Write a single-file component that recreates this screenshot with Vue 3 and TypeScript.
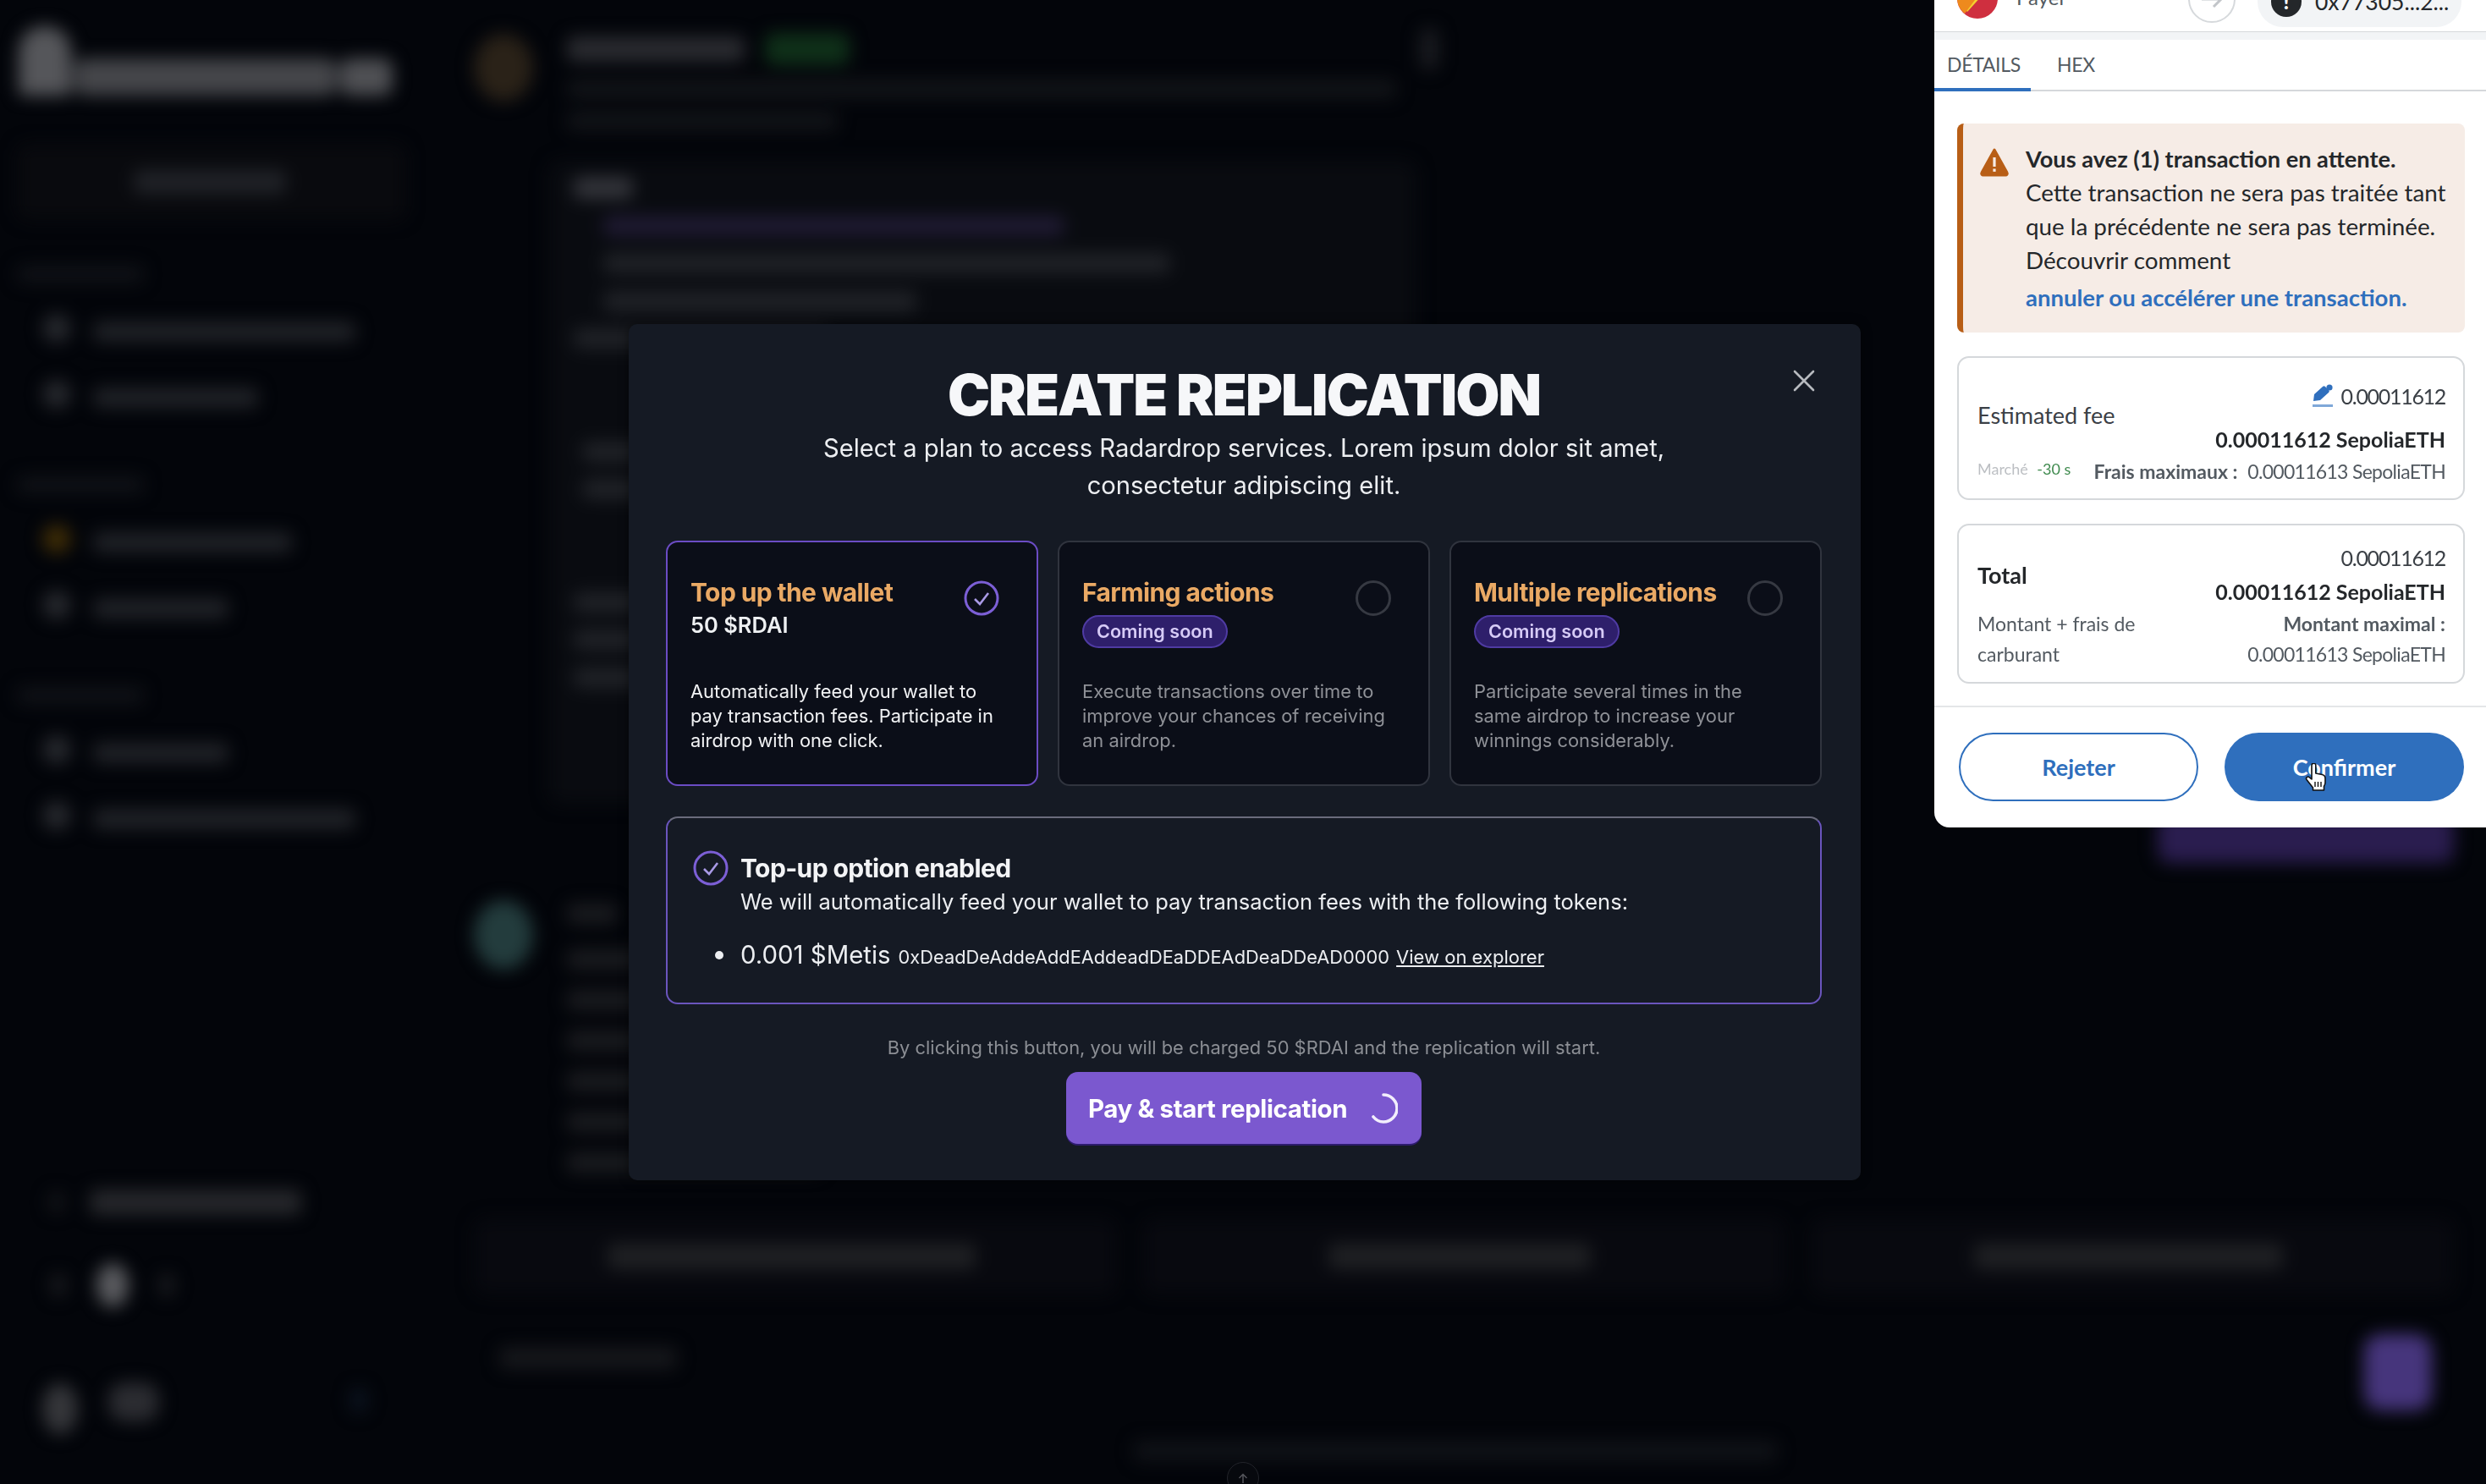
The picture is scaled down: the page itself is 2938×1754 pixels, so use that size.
<script setup lang="ts">
interface NavItem { w: number; amber?: boolean }
interface NavSection { items: NavItem[] }
interface Plan { title: string; price?: string; soon?: boolean; text: string; active?: boolean }

const sections: NavSection[] = [
  { items: [{ w: 310 }, { w: 195 }] },
  { items: [{ w: 235, amber: true }, { w: 160 }] },
  { items: [{ w: 160 }, { w: 310 }] },
]

const feedRows: { w: number; indent: number; tone?: string }[] = [
  { w: 70, indent: 0, tone: 'strong' },
  { w: 545, indent: 35, tone: 'link' },
  { w: 670, indent: 35 },
  { w: 370, indent: 35 },
  { w: 300, indent: 0 },
  { w: 0, indent: 0 },
  { w: 0, indent: 0 },
  { w: 300, indent: 10 },
  { w: 300, indent: 10 },
  { w: 0, indent: 0 },
  { w: 0, indent: 0 },
  { w: 300, indent: 0 },
  { w: 300, indent: 0 },
  { w: 300, indent: 0 },
]

const replyRows = [1, 2, 3, 4, 5, 6]
const actionBars = [435, 310, 365]

const plans: Plan[] = [
  {
    title: 'Top up the wallet',
    price: '50 $RDAI',
    text: 'Automatically feed your wallet to pay transaction fees. Participate in airdrop with one click.',
    active: true,
  },
  {
    title: 'Farming actions',
    soon: true,
    text: 'Execute transactions over time to improve your chances of receiving an airdrop.',
  },
  {
    title: 'Multiple replications',
    soon: true,
    text: 'Participate several times in the same airdrop to increase your winnings considerably.',
  },
]
</script>

<template>
  <div class="scene">
    <div class="app">
      <aside class="side">
        <div class="logo"><i class="logo-mark"></i><i class="logo-word"></i><i class="logo-tld"></i></div>
        <div class="side-btn"><i class="bar side-btn-bar"></i></div>
        <section v-for="(s, i) in sections" :key="i" class="nav-sec">
          <div class="nav-label"><i class="bar dim"></i></div>
          <div v-for="(it, j) in s.items" :key="j" class="nav-item">
            <i class="dot" :class="{ amber: it.amber }"></i>
            <i class="bar" :style="{ width: it.w + 'px' }"></i>
          </div>
        </section>
        <div class="side-foot">
          <div class="back"><i class="back-ico"></i><i class="bar back-bar"></i></div>
          <div class="toggle"><i class="tg"></i><i class="tg on"></i><i class="tg"></i></div>
          <div class="profile"><i class="pf-a"></i><i class="pf-b"></i><i class="pf-c"></i></div>
        </div>
      </aside>

      <main class="feed">
        <article class="post first">
          <i class="avatar brown"></i>
          <div class="post-body">
            <div class="post-head">
              <i class="bar name"></i><i class="badge"></i><i class="kebab"></i>
            </div>
            <i class="bar faint long"></i>
            <i class="bar faint short"></i>
            <div class="post-card">
              <div v-for="(r, i) in feedRows" :key="i" class="row">
                <i
                  v-if="r.w"
                  class="bar"
                  :class="r.tone"
                  :style="{ width: r.w + 'px', marginLeft: r.indent + 'px' }"
                ></i>
              </div>
            </div>
          </div>
        </article>
        <div class="cta-row"><i class="cta"></i></div>
        <article class="post second">
          <i class="avatar teal"></i>
          <div class="post-body">
            <i class="bar tiny"></i>
            <div class="replies">
              <i v-for="r in replyRows" :key="r" class="bar reply"></i>
            </div>
          </div>
        </article>
        <div class="actions">
          <div v-for="w in actionBars" :key="w" class="action">
            <i class="bar action-bar" :style="{ width: w + 'px' }"></i>
          </div>
        </div>
        <div class="composer">
          <i class="bar composer-bar"></i>
          <i class="send"></i>
        </div>
        <div class="disclaimer"><i class="bar dim disclaimer-bar"></i></div>
      </main>
    </div>

    <div class="down">
      <svg viewBox="0 0 24 24" width="18" height="18" fill="none" stroke="#55565c" stroke-width="2"><path d="M12 20V6M6 12l6-6 6 6" /></svg>
    </div>

    <div class="modal">
      <button class="close" aria-label="Close">
        <svg viewBox="0 0 26 26" width="26" height="26" fill="none" stroke="#b7babf" stroke-width="2.6" stroke-linecap="round"><path d="M2 2l22 22M24 2L2 24" /></svg>
      </button>
      <h1 class="title">CREATE REPLICATION</h1>
      <p class="lead">Select a plan to access Radardrop services. Lorem ipsum dolor sit amet,<br />consectetur adipiscing elit.</p>

      <div class="plans">
        <div v-for="p in plans" :key="p.title" class="plan" :class="{ active: p.active }">
          <div class="plan-head">
            <div class="plan-name">
              <div class="plan-title">{{ p.title }}</div>
              <div v-if="p.price" class="plan-price">{{ p.price }}</div>
              <span v-if="p.soon" class="soon">Coming soon</span>
            </div>
            <svg v-if="p.active" class="radio" viewBox="0 0 42 42" width="42" height="42" fill="none">
              <circle cx="21" cy="21" r="19" stroke="#7c5fd6" stroke-width="3" />
              <path d="M13 22l6 6 10-13" stroke="#a99ae6" stroke-width="2.6" />
            </svg>
            <span v-else class="radio empty"></span>
          </div>
          <p class="plan-text">{{ p.text }}</p>
        </div>
      </div>

      <div class="topup">
        <svg class="topup-icon" viewBox="0 0 42 42" width="42" height="42" fill="none">
          <circle cx="21" cy="21" r="19" stroke="#7c5fd6" stroke-width="3" />
          <path d="M13 22l6 6 10-13" stroke="#a99ae6" stroke-width="2.6" />
        </svg>
        <div class="topup-body">
          <div class="topup-title">Top-up option enabled</div>
          <div class="topup-sub">We will automatically feed your wallet to pay transaction fees with the following tokens:</div>
          <ul class="tokens">
            <li>
              <span class="amount">0.001 $Metis</span>
              <span class="addr">0xDeadDeAddeAddEAddeadDEaDDEAdDeaDDeAD0000</span>
              <a class="explorer">View on explorer</a>
            </li>
          </ul>
        </div>
      </div>

      <p class="charge">By clicking this button, you will be charged 50 $RDAI and the replication will start.</p>
      <button class="pay">
        <span>Pay &amp; start replication</span>
        <svg class="spin" viewBox="0 0 38 38" width="38" height="38" fill="none">
          <path d="M21 3a16 16 0 0 1 0 32 16 16 0 0 1-12-6" stroke="#f2eefc" stroke-width="3.6" stroke-linecap="round" />
        </svg>
      </button>
    </div>

    <div class="wallet">
      <header class="w-head">
        <div class="w-from">
          <svg viewBox="0 0 48 48" width="48" height="48" class="w-fox">
            <circle cx="24" cy="24" r="24" fill="#cf2f3f" />
            <path d="M0 24A24 24 0 0 1 24 0h24L12 40z" fill="#f4d12e" />
            <path d="M0 24a24 24 0 0 0 9 18L24 22z" fill="#ee8a1d" />
          </svg>
          <span class="w-payer">Payer</span>
        </div>
        <div class="w-arrow">
          <svg viewBox="0 0 30 30" width="30" height="30" fill="none" stroke="#c2c5c9" stroke-width="3"><path d="M3 15h23M17 6l9 9-9 9" /></svg>
        </div>
        <div class="w-to">
          <span class="w-alert">!</span>
          <span class="w-addr">0x77305...2...</span>
        </div>
      </header>
      <div class="w-band"></div>
      <nav class="w-tabs">
        <span class="w-tab on">DÉTAILS</span>
        <span class="w-tab">HEX</span>
      </nav>

      <div class="w-body">
        <div class="w-warn">
          <svg class="w-tri" viewBox="0 0 36 36" width="36" height="36">
            <path d="M18 3L33 30a2 2 0 0 1-2 3H5a2 2 0 0 1-2-3z" fill="#b85e16" stroke="#b85e16" stroke-width="3" stroke-linejoin="round" />
            <rect x="16.4" y="12" width="3.2" height="11" fill="#f6ece6" />
            <rect x="16.4" y="25.5" width="3.2" height="3.4" fill="#f6ece6" />
          </svg>
          <div class="w-warn-text">
            <strong>Vous avez (1) transaction en attente.</strong><br />
            Cette transaction ne sera pas traitée tant<br />
            que la précédente ne sera pas terminée.<br />
            Découvrir comment
            <a class="w-link">annuler ou accélérer une transaction.</a>
          </div>
        </div>

        <div class="w-card fee">
          <div class="w-row">
            <span class="w-label up">Estimated fee</span>
            <div class="w-right">
              <div class="w-line">
                <svg class="w-pen" viewBox="0 0 24 28" width="24" height="28">
                  <path d="M1 20l1-8L12 3c1-1 2-1 3 0l4 4c1 1 1 2 0 3L9 19z" fill="#2f6fbd" />
                  <circle cx="20" cy="4" r="3.600" fill="#2f6fbd" />
                  <rect x="0" y="24" width="24" height="3" fill="#7fa8d8" />
                </svg>
                <span class="num">0.00011612</span>
              </div>
              <div class="w-line bold">0.00011612 SepoliaETH</div>
            </div>
          </div>
          <div class="w-row foot">
            <span class="w-market">Marché <em>-30 s</em></span>
            <span class="w-max"><b>Frais maximaux :</b>&nbsp; <span class="val">0.00011613 SepoliaETH</span></span>
          </div>
        </div>

        <div class="w-card total">
          <div class="w-row">
            <span class="w-label bold">Total</span>
            <div class="w-right">
              <div class="w-line"><span class="num">0.00011612</span></div>
              <div class="w-line bold">0.00011612 SepoliaETH</div>
            </div>
          </div>
          <div class="w-row two">
            <span class="w-small">Montant + frais de<br />carburant</span>
            <span class="w-small end"><b>Montant maximal :</b><br /><span class="val">0.00011613 SepoliaETH</span></span>
          </div>
        </div>
      </div>

      <footer class="w-foot">
        <button class="w-btn ghost">Rejeter</button>
        <button class="w-btn solid">
          Confirmer
          <svg class="w-hand" viewBox="0 0 26 34" width="26" height="34">
            <path d="M8 2.500a2.400 2.400 0 0 1 4.800 0V12l7.500 1.500c2.500.5 3.700 2 3.700 4.500v5c0 2-.5 3-1.500 4.500V32H9.500v-3L2 19.500c-1.500-2.200 1.300-4.600 3.400-2.700L8 19z" fill="#fff" stroke="#111" stroke-width="1.600" stroke-linejoin="round" />
            <path d="M12 22v6M15.500 22v6M19 22v6" stroke="#111" stroke-width="1.400" />
          </svg>
        </button>
      </footer>
    </div>
  </div>
</template>

<style>
html, body { margin: 0; background: #03050a; }
</style>

<style scoped>
.scene { position: relative; width: 2938px; height: 1754px; overflow: hidden; background: #03050a; font-family: Inter, "Liberation Sans", sans-serif; }
.app { display: flex; width: 2938px; height: 1754px; filter: blur(10px); }
i { display: block; font-style: normal; }

.bar { height: 24px; background: #202227; border-radius: 8px; }
.bar.dim { background: #101217; }

.side { width: 530px; flex: none; display: flex; flex-direction: column; height: 1754px; box-sizing: border-box; padding-top: 25px; padding-bottom: 54px; }
.logo { height: 96px; display: flex; align-items: flex-end; padding: 0 0 8px 22px; box-sizing: border-box; gap: 4px; }
.logo-mark { width: 62px; height: 82px; background: #55565a; border-radius: 30px 30px 6px 6px; }
.logo-word { width: 310px; height: 44px; background: #45464a; border-radius: 12px; }
.logo-tld { width: 62px; height: 44px; background: #4f5054; border-radius: 12px; }
.side-btn { margin: 49px 50px 0 20px; height: 90px; background: #090a0e; border-radius: 14px; display: flex; align-items: center; padding-left: 138px; }
.side-btn-bar { width: 180px; height: 28px; }
.nav-sec { padding-left: 20px; margin-bottom: 35px; }
.side-btn + .nav-sec { margin-top: 35px; }
.nav-label { height: 58px; display: flex; align-items: center; }
.nav-label .bar { width: 150px; height: 20px; }
.nav-item { height: 78px; display: flex; align-items: center; gap: 26px; padding-left: 30px; }
.dot { width: 34px; height: 34px; border-radius: 50%; background: #26282d; margin-top: -8px; }
.dot.amber { background: #3e2c06; }
.side-foot { margin-top: auto; display: flex; flex-direction: column; }
.back { height: 30px; padding-left: 58px; display: flex; gap: 30px; align-items: center; }
.back-ico { width: 18px; height: 24px; border-radius: 8px; background: #15161a; }
.back-bar { width: 250px; height: 30px; background: #26272b; }
.toggle { margin-top: 58px; height: 50px; display: flex; align-items: center; padding-left: 60px; gap: 36px; }
.tg { width: 18px; height: 28px; background: #1a1b1f; border-radius: 9px; }
.tg.on { width: 38px; height: 52px; background: #5a5b5f; border-radius: 50%; }
.profile { margin-top: 86px; height: 70px; display: flex; align-items: center; padding-left: 50px; gap: 36px; }
.pf-a { width: 42px; height: 60px; border-radius: 50%; background: #35363a; }
.pf-b { width: 60px; height: 46px; border-radius: 20px; background: #2b2c31; margin-top: -16px; }
.pf-c { width: 20px; height: 30px; border-radius: 10px; background: #0c1420; margin-left: 190px; margin-top: -20px; }

.feed { flex: 1; min-width: 0; display: flex; flex-direction: column; padding: 0 38px 0 30px; box-sizing: border-box; height: 1754px; }
.post { display: flex; gap: 40px; }
.post.first { padding-top: 40px; }
.avatar { flex: none; width: 70px; height: 80px; border-radius: 50%; }
.avatar.brown { background: #2a2218; }
.avatar.teal { background: #233c3d; margin-top: 4px; height: 82px; }
.post-body { flex: 1; min-width: 0; }
.post-head { display: flex; align-items: center; gap: 24px; height: 36px; max-width: 1030px; }
.name { width: 210px; height: 30px; background: #2a2b30; }
.badge { width: 100px; height: 38px; border-radius: 10px; background: #0f3019; }
.kebab { width: 22px; height: 50px; border-radius: 10px; background: #1a1b20; margin-left: auto; }
.bar.faint { background: #121418; height: 22px; }
.bar.long { width: 980px; margin-top: 18px; }
.bar.short { width: 320px; margin-top: 16px; }
.post-card { margin-top: 36px; margin-left: -22px; width: 1026px; background: #090b10; border-radius: 16px; padding: 10px 0 0 30px; box-sizing: border-box; height: 760px; }
.row { height: 44.500px; display: flex; align-items: center; }
.bar.strong { background: #33343a; height: 26px; }
.bar.link { background: #1f1a32; }

.cta-row { display: flex; justify-content: flex-end; height: 70px; align-items: flex-end; }
.cta { width: 350px; height: 60px; border-radius: 14px; background: #2a1d4f; }
.post.second { margin-top: 40px; height: 340px; }
.tiny { width: 60px; height: 24px; background: #1a1b1f; margin-top: 8px; }
.replies { margin-top: 30px; display: flex; flex-direction: column; gap: 24px; }
.reply { width: 300px; background: #1a1b1f; }

.actions { margin-top: 40px; display: flex; gap: 30px; height: 90px; flex: none; }
.action { flex: 1; background: #08090f; border-radius: 16px; display: flex; align-items: center; justify-content: center; }
.action-bar { height: 30px; background: #1f2023; margin-left: -10px; }
.composer { margin-top: 18px; display: flex; justify-content: space-between; align-items: center; height: 130px; padding-left: 30px; flex: none; }
.composer-bar { width: 210px; height: 26px; background: #16171b; margin-bottom: 16px; }
.send { width: 80px; height: 90px; border-radius: 20px; background: #46357c; margin: 18px 26px 0 0; }
.disclaimer { margin-top: 25px; padding-left: 780px; flex: none; }
.disclaimer-bar { width: 760px; height: 24px; }

.down { position: absolute; left: 1450px; top: 1728px; width: 36px; height: 36px; border-radius: 50%; border: 1px solid #22242a; display: flex; align-items: center; justify-content: center; background: #07090e; }

.modal { position: absolute; left: 743px; top: 383px; width: 1456px; height: 1012px; box-sizing: border-box; padding: 52px 46px 0 44px; background: #151a24; border-radius: 10px; color: #fff; text-align: center; box-shadow: 0 0 12px rgba(0, 0, 0, .5); filter: blur(.5px); }
.close { position: absolute; right: 54px; top: 54px; background: none; border: 0; padding: 0; line-height: 0; }
.title { margin: 0; font-size: 67px; line-height: 64px; font-weight: 900; letter-spacing: -1.900px; color: #f6f7f9; }
.lead { margin: 9px 0 0; font-size: 29.200px; line-height: 44px; color: #eceef1; }

.plans { margin-top: 43px; display: grid; grid-template-columns: repeat(3, 440px); gap: 23px; text-align: left; }
.plan { height: 290px; box-sizing: border-box; padding: 40px 20px 0 27px; border: 2px solid #30343e; border-radius: 14px; background: #0b0e18; color: #8f9197; }
.plan.active { border-color: #6b4cc4; color: #f1f2f4; }
.plan-head { display: flex; justify-content: space-between; min-height: 122px; box-sizing: border-box; padding-right: 24px; }
.plan-title { font-size: 30px; line-height: 38px; font-weight: 700; color: #eaa964; letter-spacing: -.6px; }
.plan-price { margin-top: 1px; font-size: 25.500px; line-height: 38px; font-weight: 600; color: #eef0f2; }
.soon { display: inline-block; margin-top: 8px; height: 39px; line-height: 35px; box-sizing: border-box; padding: 0 15px; font-size: 21.600px; font-weight: 600; color: #d6cbf6; background: #2e1f6b; border: 2px solid #4f3ba3; border-radius: 20px; }
.radio { flex: none; margin-top: 5px; }
.radio.empty { width: 42px; height: 42px; box-sizing: border-box; border: 3px solid #363942; border-radius: 50%; }
.plan-text { margin: 0; max-width: 366px; font-size: 21.900px; line-height: 29px; }

.topup { margin-top: 36px; height: 222px; box-sizing: border-box; padding: 41px 30px 0 30px; border: 2px solid #6a55bd; border-top-color: #6a6b7c; border-radius: 14px; display: flex; gap: 14px; text-align: left; }
.topup-icon { flex: none; margin-top: -3px; }
.topup-title { font-size: 30px; line-height: 36px; font-weight: 700; color: #f3f4f6; letter-spacing: -.6px; }
.topup-sub { margin-top: 3px; font-size: 25.500px; line-height: 38px; color: #eceef1; }
.tokens { margin: 25px 0 0; padding: 0; list-style: none; position: relative; }
.tokens li { line-height: 38px; white-space: nowrap; }
.tokens li::before { content: ""; position: absolute; left: -30px; top: 14px; width: 10px; height: 10px; border-radius: 50%; background: #eceef1; }
.amount { font-size: 29.400px; color: #eceef1; }
.addr { font-size: 21.800px; color: #eceef1; margin-left: 9px; }
.explorer { font-size: 22px; color: #eceef1; text-decoration: underline; margin-left: 8px; }

.charge { margin: 36px 0 0; font-size: 21.900px; line-height: 30px; color: #8b8e94; }
.pay { margin-top: 14px; width: 420px; height: 85px; border: 0; border-radius: 14px; background: #7b58cf; color: #fff; font-family: inherit; font-size: 29.500px; font-weight: 700; letter-spacing: -.4px; display: inline-flex; align-items: center; justify-content: space-between; padding: 0 28px 0 26px; box-sizing: border-box; box-shadow: 0 2px 0 #2e1c6e; }

.wallet { position: absolute; left: 2286px; top: 0; width: 652px; height: 978px; background: #fff; border-radius: 0 0 0 18px; color: #24272a; font-family: Lato, "Liberation Sans", sans-serif; display: flex; flex-direction: column; box-sizing: border-box; filter: blur(.5px); }
.w-head { height: 37px; overflow: hidden; display: flex; align-items: flex-end; position: relative; border-bottom: 1px solid #d5d8db; box-sizing: content-box; }
.w-from { width: 298px; flex: none; display: flex; align-items: flex-end; gap: 22px; padding-left: 27px; box-sizing: border-box; margin-bottom: 15px; height: 60px; }
.w-fox { flex: none; margin-bottom: 0; }
.w-payer { font-size: 24px; color: #535a61; line-height: 26px; margin-bottom: 12px; }
.w-arrow { flex: none; width: 56px; height: 56px; margin: 0 0 10px 2px; border: 2px solid #d6d9dc; border-radius: 50%; box-sizing: border-box; background: #fff; display: flex; align-items: center; justify-content: center; }
.w-to { margin-left: 26px; width: 241px; height: 60px; margin-bottom: 5px; background: #f2f4f6; border-radius: 0 0 30px 30px; display: flex; align-items: center; gap: 16px; padding-left: 16px; box-sizing: border-box; white-space: nowrap; overflow: hidden; }
.w-alert { width: 36px; height: 36px; flex: none; border-radius: 50%; background: #24272a; color: #fff; text-align: center; line-height: 36px; font-weight: 900; font-size: 24px; }
.w-addr { font-size: 26.500px; color: #24272a; }
.w-band { height: 9px; background: #f2f4f6; }
.w-tabs { height: 61px; display: flex; border-bottom: 2px solid #d5d8db; box-sizing: border-box; }
.w-tab { height: 61px; box-sizing: border-box; font-size: 23px; letter-spacing: -.3px; line-height: 58px; color: #535a61; padding: 0 15px; }
.w-tab.on { border-bottom: 4px solid #2f6fbd; width: 114px; }
.w-tab:not(.on) { padding-left: 31px; }

.w-body { padding: 38px 25px 0 27px; flex: none; height: 728px; box-sizing: border-box; border-bottom: 2px solid #e4e6e8; }
.w-warn { height: 247px; box-sizing: border-box; padding: 22px 0 0 19px; display: flex; gap: 19px; background: #f6ece6; border-left: 7px solid #b85e16; border-radius: 8px; font-size: 27.800px; line-height: 40px; }
.w-tri { flex: none; margin-top: 6px; }
.w-warn-text { white-space: nowrap; }
.w-warn-text strong { font-weight: 700; font-size: 27.200px; }
.w-link { display: block; margin-top: 4px; color: #2f6fbd; font-weight: 700; font-size: 27.500px; }
.w-card { border: 2px solid #d5d8db; border-radius: 14px; box-sizing: border-box; padding: 0 21px 0 22px; }
.fee { margin-top: 28px; height: 170px; padding-top: 25px; }
.total { margin-top: 28px; height: 189px; padding-top: 18px; }
.w-row { display: flex; justify-content: space-between; align-items: center; }
.w-label { font-size: 27px; color: #3b4046; }
.w-label.up { margin-top: -6px; }
.w-label.bold { font-weight: 700; color: #24272a; }
.w-right { text-align: right; }
.w-line { font-size: 25px; line-height: 40px; color: #3b4046; display: flex; justify-content: flex-end; align-items: center; gap: 10px; }
.num { letter-spacing: -1.300px; }
.w-line.bold { font-weight: 700; color: #24272a; }
.fee .w-line.bold { margin-top: 11px; }
.w-row.foot { height: 30px; margin-top: 3px; }
.w-market { font-size: 18px; color: #bcbfc3; margin-top: -6px; }
.w-market em { font-style: normal; color: #3f8a4e; margin-left: 6px; }
.w-max { font-size: 23px; color: #535a61; white-space: nowrap; }
.w-max b, .w-small b { font-weight: 700; color: #535a61; }
.val { letter-spacing: -.7px; }
.w-row.two { align-items: flex-start; }
.w-small { font-size: 23px; line-height: 36px; color: #535a61; }
.w-small.end { text-align: right; }
.w-foot { display: flex; justify-content: space-between; padding: 30px 26px 0 29px; }
.w-btn { width: 283px; height: 81px; border-radius: 41px; font-family: inherit; font-size: 27px; font-weight: 700; position: relative; }
.w-btn.ghost { background: #fff; color: #2f6fbd; border: 2px solid #2f6fbd; }
.w-btn.solid { background: #2f6fbd; color: #fff; border: 0; }
.w-hand { position: absolute; left: 95px; top: 36px; }
</style>
